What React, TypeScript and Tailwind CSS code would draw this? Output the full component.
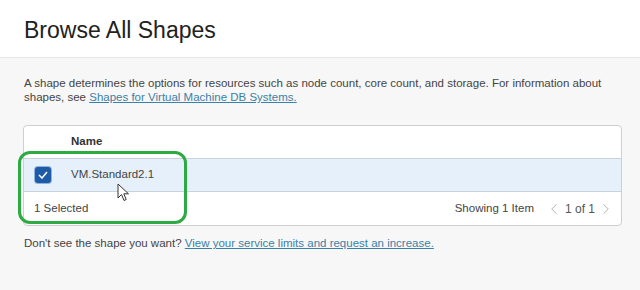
import { ChevronLeft, ChevronRight } from "lucide-react";

function Cursor() {
  return (
    <svg width="14" height="20" viewBox="0 0 14 20" className="absolute left-[117px] top-[183px]">
      <path
        d="M1 1 L1 15 L4.5 11.5 L7 17.5 L9.2 16.5 L6.8 10.8 L11.5 10.8 Z"
        fill="#fff"
        stroke="#333"
        strokeWidth="1"
        strokeLinejoin="round"
      />
    </svg>
  );
}

export default function App() {
  return (
    <div
      className="relative h-[290px] w-[640px] overflow-hidden bg-[#f7f7f7] text-[#333]"
      style={{ fontFamily: '"Liberation Sans", Arial, sans-serif' }}
    >
      <header className="h-[58px] border-b border-[#e6e6e6] bg-white px-6 pt-[16px]">
        <h1 className="text-[23px] leading-[28px] text-[#222]">Browse All Shapes</h1>
      </header>

      <div className="px-6 pt-[18px]">
        <p className="text-[11.5px] leading-[14px] text-[#444]">
          A shape determines the options for resources such as node count, core count, and storage. For information about
          shapes, see <a className="text-[#3c7fa8] underline">Shapes for Virtual Machine DB Systems.</a>
        </p>

        <div className="ml-[-1px] mt-[21px] w-[599px] rounded-sm border border-[#cfcfcf] bg-white text-[11.5px]">
          <div className="flex h-[33px] items-center border-b border-[#c8d3dc] pl-[47px] font-bold text-[#333]">
            Name
          </div>
          <div className="flex h-[33px] items-center border-b border-[#c8d3dc] bg-[#e5f0fa]">
            <div className="ml-[11px] flex h-[16px] w-[16px] items-center justify-center rounded-[3px] bg-[#1f5aa6] shadow-[0_0_0_1px_#8fb3de]">
              <svg width="10" height="8" viewBox="0 0 10 8">
                <path d="M1 4 L4 7 L9 1" fill="none" stroke="#fff" strokeWidth="1.5" />
              </svg>
            </div>
            <span className="ml-[20px] text-[#444]">VM.Standard2.1</span>
          </div>
          <div className="flex h-[33px] items-center pl-[10px] pr-[6px] text-[#444]">
            <span>1 Selected</span>
            <span className="ml-auto">Showing 1 Item</span>
            <div className="ml-[11px] flex items-center gap-[2px] text-[12px] text-[#555]">
              <ChevronLeft size={18} strokeWidth={1} className="text-[#999]" />
              <span>1 of 1</span>
              <ChevronRight size={18} strokeWidth={1} className="text-[#999]" />
            </div>
          </div>
        </div>

        <p className="mt-[9px] text-[11.5px] text-[#444]">
          Don't see the shape you want?{" "}
          <a className="text-[#3c7fa8] underline">View your service limits and request an increase.</a>
        </p>
      </div>

      <div className="absolute left-[18px] top-[151px] h-[73px] w-[169px] rounded-[12px] border-[3px] border-[#2eaa44]" />
      <Cursor />
    </div>
  );
}
